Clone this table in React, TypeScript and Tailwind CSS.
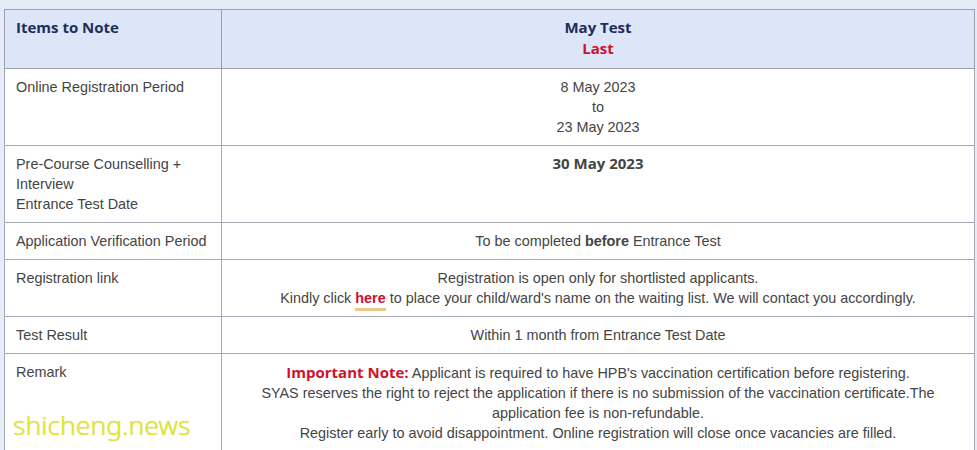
const rows: { label: React.ReactNode; value: React.ReactNode }[] = [
  {
    label: "Online Registration Period",
    value: (
      <>
        8 May 2023
        <br />
        to
        <br />
        23 May 2023
      </>
    ),
  },
  {
    label: (
      <>
        Pre-Course Counselling + Interview
        <br />
        Entrance Test Date
      </>
    ),
    value: <span className="font-['Open_Sans',sans-serif] font-bold text-[15px] leading-4">30 May 2023</span>,
  },
  {
    label: "Application Verification Period",
    value: (
      <>
        To be completed <b>before</b> Entrance Test
      </>
    ),
  },
  {
    label: "Registration link",
    value: (
      <>
        Registration is open only for shortlisted applicants.
        <br />
        Kindly click{" "}
        <a className="font-bold text-[#c8102e] border-b-[3px] border-[#ecc68a] pb-[2px]">here</a> to place your
        child/ward's name on the waiting list. We will contact you accordingly.
      </>
    ),
  },
  { label: "Test Result", value: "Within 1 month from Entrance Test Date" },
  {
    label: "Remark",
    value: (
      <>
        <span className="font-['Open_Sans',sans-serif] font-bold text-[15px] text-[#d0112b]">Important Note:</span>{" "}
        Applicant is required to have HPB's vaccination certification before registering.
        <br />
        SYAS reserves the right to reject the application if there is no submission of the vaccination
        certificate.The application fee is non-refundable.
        <br />
        Register early to avoid disappointment. Online registration will close once vacancies are filled.
      </>
    ),
  },
];

export default function App() {
  return (
    <div className="relative w-[977px] h-[450px] overflow-hidden bg-[#e5ebf7] pt-[9px] pl-[4px] pr-[2px]">
      <table className="w-[971px] table-fixed border-collapse font-['Liberation_Sans',Arial,sans-serif] text-[14.4px] leading-5 text-[#444]">
        <colgroup>
          <col className="w-[217px]" />
          <col />
        </colgroup>
        <thead>
          <tr className="bg-[#dde6f8] font-['Open_Sans',sans-serif] text-[15px] font-bold text-[#1c2d5a] leading-[21px]">
            <th className="border border-[#9ba0ab] px-[11px] pt-[7px] pb-[9px] text-left align-top font-bold">
              Items to Note
            </th>
            <th className="border border-[#9ba0ab] px-[11px] pt-[7px] pb-[9px] text-center align-top font-bold">
              May Test
              <br />
              <span className="text-[#d0112b]">Last</span>
            </th>
          </tr>
        </thead>
        <tbody className="bg-white">
          {rows.map((r, i) => (
            <tr key={i}>
              <td className="border border-[#a3a8b2] px-[11px] pt-[8px] pb-[8px] align-top">{r.label}</td>
              <td className="border border-[#a3a8b2] px-[11px] pt-[8px] pb-[8px] align-top text-center">
                {r.value}
              </td>
            </tr>
          ))}
        </tbody>
      </table>
      <div className="absolute left-[13px] top-[409px] font-['Noto_Sans',sans-serif] font-light text-[26.5px] leading-8 text-[#e3e72e] [text-shadow:0_0_1px_#c9cc55]">
        shicheng.news
      </div>
    </div>
  );
}
